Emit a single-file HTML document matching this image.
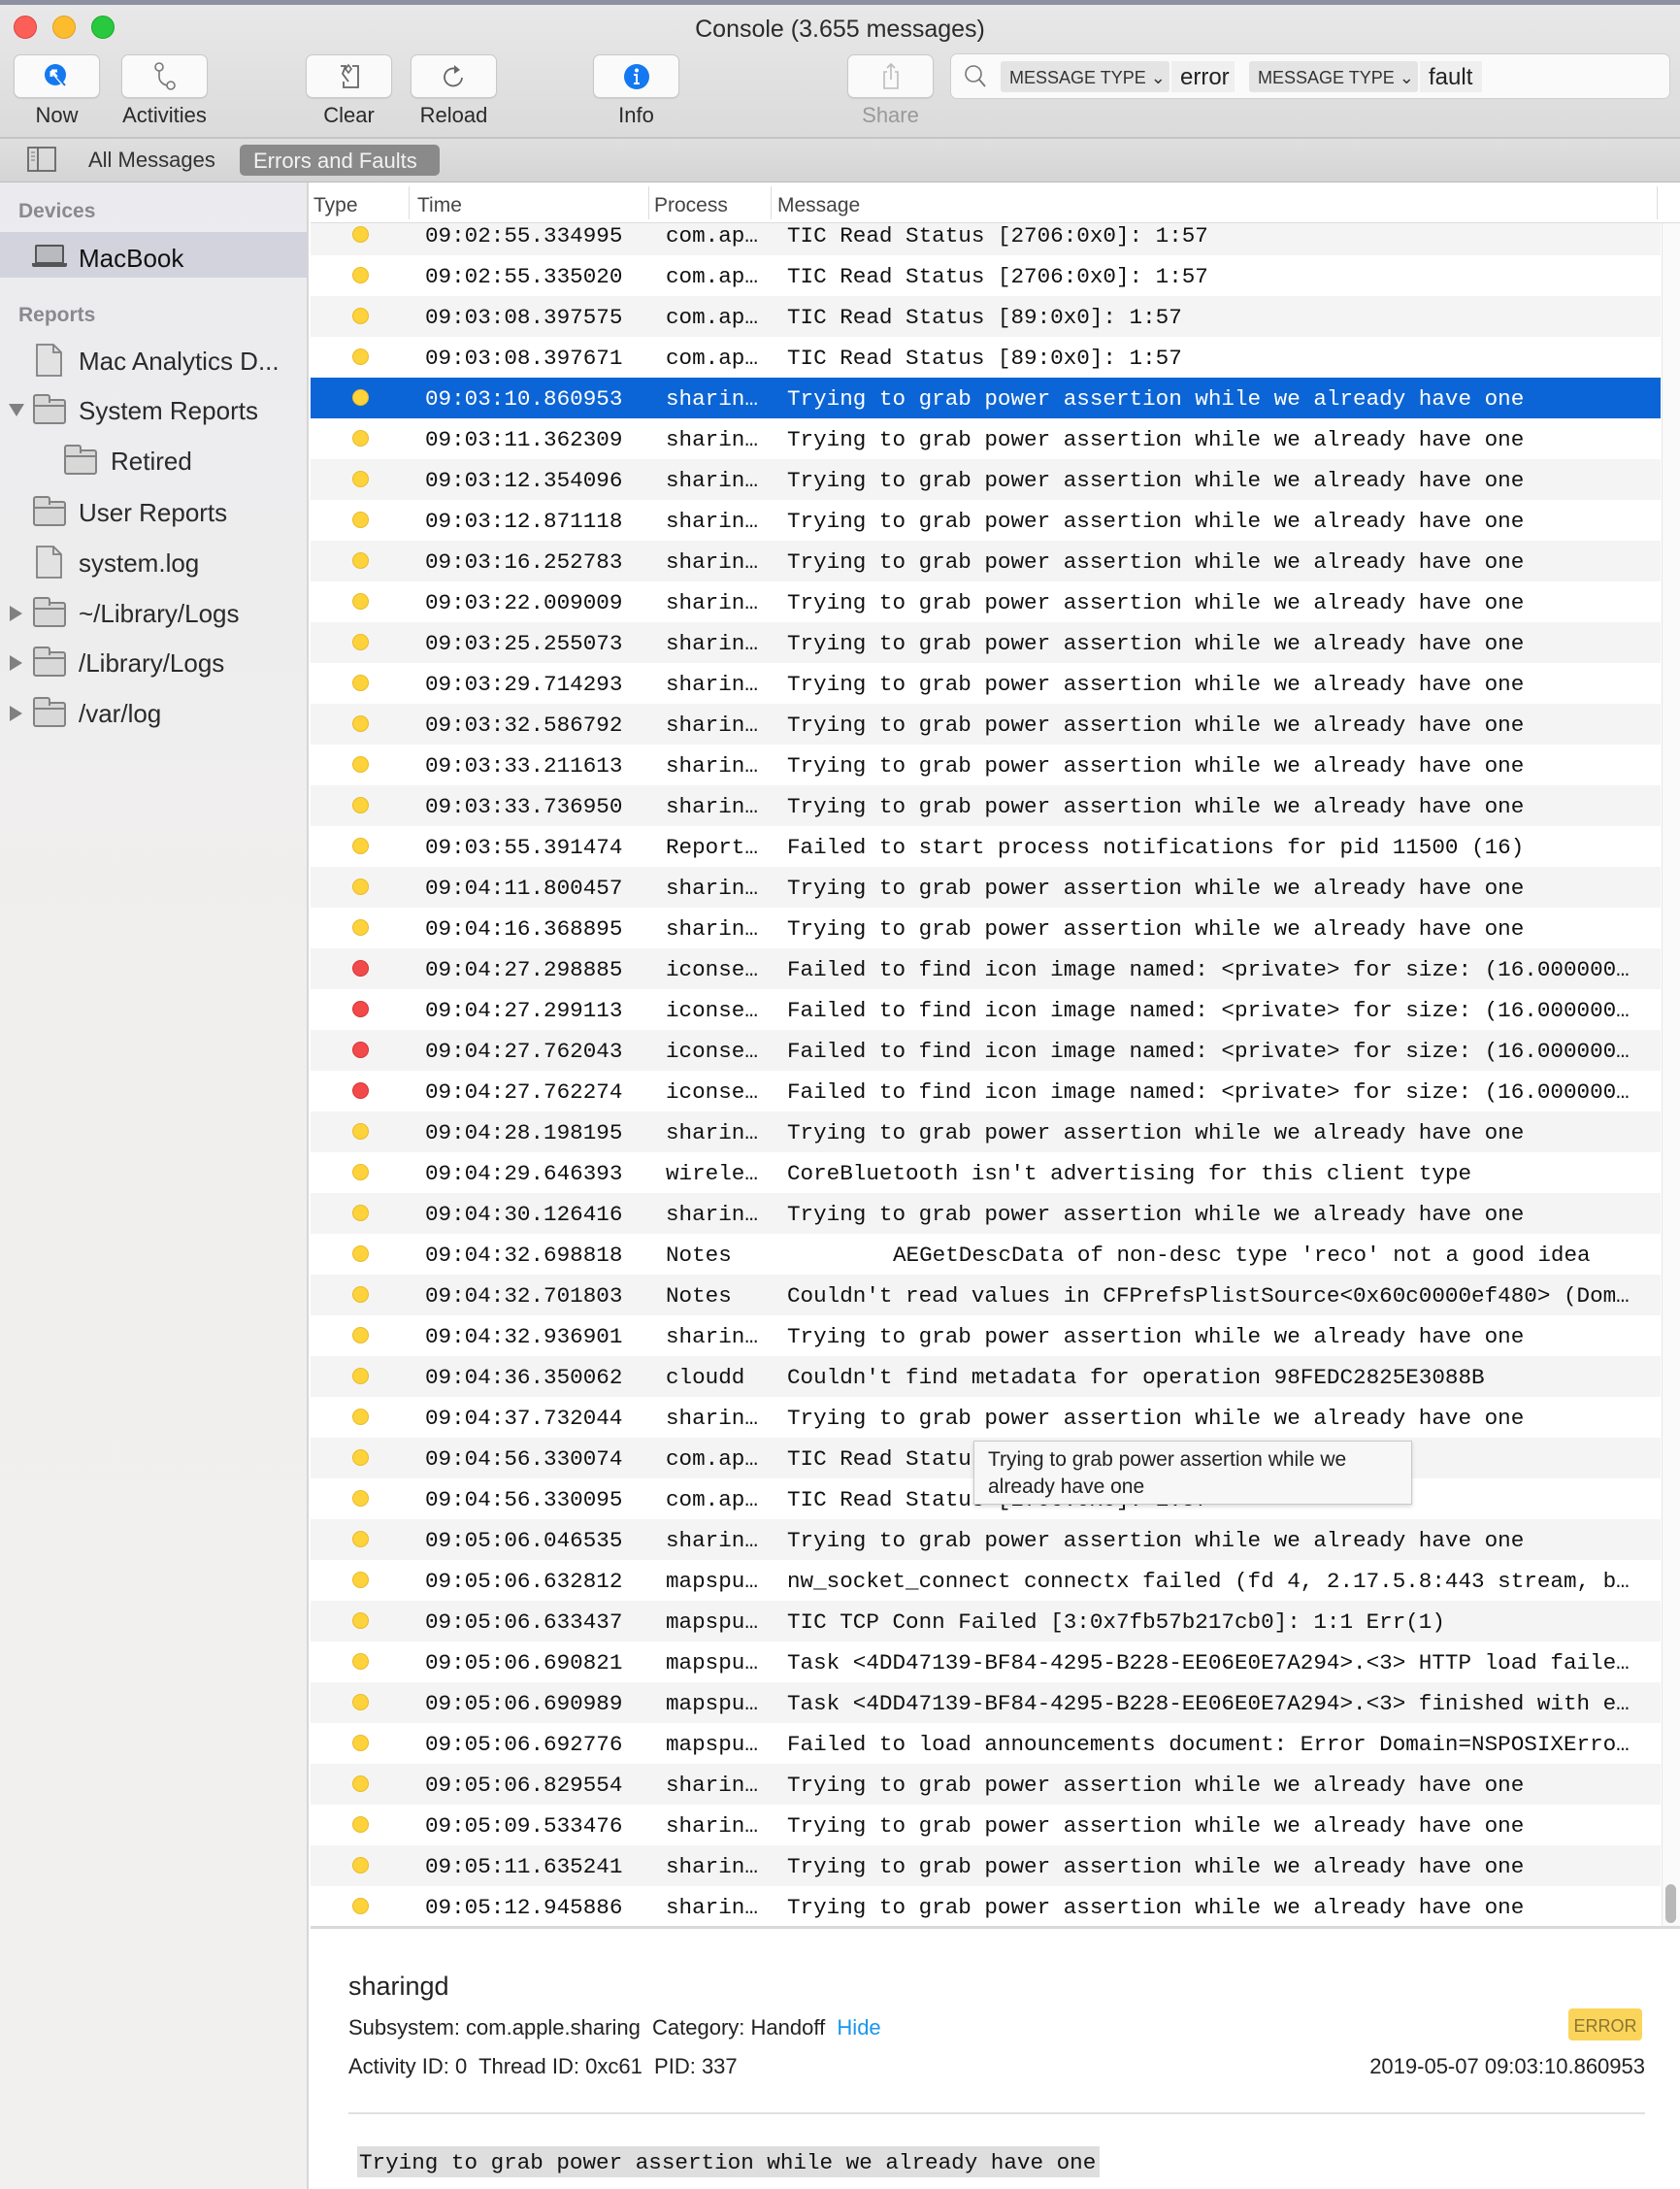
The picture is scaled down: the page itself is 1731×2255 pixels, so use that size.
<!DOCTYPE html>
<html><head><meta charset="utf-8"><style>
*{margin:0;padding:0;box-sizing:border-box}
body{width:1731px;height:2255px;overflow:hidden;position:relative;font-family:"Liberation Sans",sans-serif;background:#fff;color:#222}
.abs{position:absolute}
#top{left:0;top:0;width:1731px;height:188px;background:linear-gradient(#e9e8e9,#d7d6d7);border-top:5px solid #8d90a0}
#bar2{left:0;top:141px;width:1731px;height:47px;background:linear-gradient(#e0dfe0,#d5d4d5);border-top:2px solid #c4c4c4;border-bottom:1px solid #bcbcbc}
.light{width:24px;height:24px;border-radius:50%;top:16px}
.btn{top:56px;height:45px;background:#fafafa;border:1px solid #c9c9c9;border-radius:7px;box-shadow:0 1px 1px rgba(0,0,0,.08);display:flex;align-items:center;justify-content:center}
.lbl{top:106px;font-size:22px;color:#2a2a2a;text-align:center}
#side{left:0;top:188px;width:318px;height:2067px;background:linear-gradient(#ebebef,#f1efed 40%,#f2f0ee);border-right:2px solid #d6d6d6}
.sh{font-size:21px;font-weight:bold;color:#8a8a8e;left:19px}
.si{font-size:26px;color:#2a2a2a;left:81px;white-space:nowrap}
.fold{width:34px;height:26px;border:2px solid #838383;border-radius:3px;background:#d8d8d8}
.fold:before{content:"";position:absolute;left:-2px;top:-7px;width:14px;height:7px;border:2px solid #838383;border-bottom:none;border-radius:3px 3px 0 0;background:#d8d8d8}
.fold:after{content:"";position:absolute;left:0;top:4px;width:30px;height:2px;background:#838383}
.tri{width:0;height:0;border-top:8px solid transparent;border-bottom:8px solid transparent;border-left:13px solid #808080}
#hdr{left:320px;top:188px;width:1411px;height:42px;background:#fff;border-bottom:1px solid #ddd;font-size:21px;color:#444}
#hdr span{position:absolute;top:12px}
#hdr i{position:absolute;top:4px;width:1px;height:34px;background:#ddd}
#list{left:320px;top:230px;width:1391px;height:1754px;overflow:hidden}
#rows{position:absolute;left:0;top:-9px;width:100%}
.r{height:42px;position:relative;font-family:"Liberation Mono",monospace;font-size:22.6px;color:#111;white-space:pre}
.r:nth-child(odd){background:#f4f4f4}
.r:nth-child(even){background:#fff}
.r.sel{background:#0c65d6;color:#fff}
.r b{position:absolute;left:43px;top:12px;width:17px;height:17px;border-radius:50%;background:#fdd23b;border:1px solid #e9bb2a}
.r b.e{background:#f24a4a;border-color:#d83434}
.r span{position:absolute;top:9px}
.t{left:118px}.p{left:366px}.m{left:491px}
#det{left:320px;top:1984px;width:1411px;height:271px;background:#fff;border-top:3px solid #d9d9d9}
</style></head><body>
<div id="top" class="abs"></div>
<div class="abs light" style="left:14px;background:#fc5f57;border:1px solid #e0443e"></div>
<div class="abs light" style="left:54px;background:#fdbc2e;border:1px solid #dea123"></div>
<div class="abs light" style="left:94px;background:#28c83f;border:1px solid #1aab29"></div>
<div class="abs" style="left:0;width:1731px;top:16px;text-align:center;font-size:25px;color:#2b2b2b">Console (3.655 messages)</div>

<div class="abs btn" style="left:14px;width:89px"><svg width="30" height="34" viewBox="0 0 30 34"><circle cx="13" cy="15" r="11" fill="#1478f0"/><path d="M9 11l12 14M9 11v6M9 11h6" stroke="#fff" stroke-width="3" fill="none"/><path d="M15 17l8 9" stroke="#1478f0" stroke-width="2"/></svg></div>
<div class="abs btn" style="left:125px;width:89px"><svg width="30" height="34" viewBox="0 0 30 34"><circle cx="9" cy="7" r="4" fill="none" stroke="#777" stroke-width="1.6"/><circle cx="21" cy="26" r="4" fill="none" stroke="#777" stroke-width="1.6"/><path d="M9 11v6c0 5 4 8 8 9" fill="none" stroke="#777" stroke-width="1.6"/></svg></div>
<div class="abs btn" style="left:315px;width:89px"><svg width="30" height="34" viewBox="0 0 30 34"><path d="M6 6h5l-3 8 6 8M18 6h6v22H9v-6" fill="none" stroke="#666" stroke-width="1.8"/><path d="M14 5l3 4-3 4-3-4z" fill="none" stroke="#666" stroke-width="1.5"/></svg></div>
<div class="abs btn" style="left:423px;width:89px"><svg width="30" height="34" viewBox="0 0 30 34"><path d="M19 10a9 9 0 1 0 4 8" fill="none" stroke="#666" stroke-width="1.8"/><path d="M15 5l6 5-6 4z" fill="#666"/></svg></div>
<div class="abs btn" style="left:611px;width:89px"><svg width="32" height="34" viewBox="0 0 32 34"><circle cx="16" cy="17" r="13" fill="#1478f0"/><circle cx="16" cy="10.5" r="2" fill="#fff"/><path d="M13 14h4v9h2v2h-6v-2h2v-7h-2z" fill="#fff"/></svg></div>
<div class="abs btn" style="left:873px;width:89px"><svg width="30" height="34" viewBox="0 0 30 34"><path d="M11 12H8v17h14V12h-3M15 4v16M11 8l4-4 4 4" fill="none" stroke="#bbb" stroke-width="1.6"/></svg></div>
<div class="abs lbl" style="left:14px;width:89px">Now</div>
<div class="abs lbl" style="left:110px;width:119px">Activities</div>
<div class="abs lbl" style="left:315px;width:89px">Clear</div>
<div class="abs lbl" style="left:423px;width:89px">Reload</div>
<div class="abs lbl" style="left:611px;width:89px">Info</div>
<div class="abs lbl" style="left:873px;width:89px;color:#999">Share</div>

<div class="abs" style="left:979px;top:55px;width:742px;height:47px;background:#fafafa;border:1px solid #cfcfcf;border-radius:7px"></div>
<svg class="abs" style="left:991px;top:64px" width="28" height="30" viewBox="0 0 28 30"><circle cx="12" cy="12" r="8" fill="none" stroke="#777" stroke-width="1.6"/><path d="M18 18l6 7" stroke="#777" stroke-width="1.8"/></svg>
<div class="abs" style="left:1031px;top:63px;width:174px;height:32px;background:#e4e4e4;border-radius:3px;font-size:18px;color:#333;padding:7px 0 0 9px">MESSAGE TYPE ⌄</div>
<div class="abs" style="left:1207px;top:63px;width:65px;height:32px;background:#efefef;font-size:24px;color:#222;padding:3px 0 0 9px">error</div>
<div class="abs" style="left:1287px;top:63px;width:174px;height:32px;background:#e4e4e4;border-radius:3px;font-size:18px;color:#333;padding:7px 0 0 9px">MESSAGE TYPE ⌄</div>
<div class="abs" style="left:1463px;top:63px;width:64px;height:32px;background:#efefef;font-size:24px;color:#222;padding:3px 0 0 9px">fault</div>

<div id="bar2" class="abs"></div>
<svg class="abs" style="left:28px;top:151px" width="32" height="26" viewBox="0 0 32 26"><rect x="1" y="1" width="28" height="24" fill="none" stroke="#666" stroke-width="1.8"/><path d="M11 1v24" stroke="#666" stroke-width="1.8"/><path d="M4 6h4M4 10h4M4 14h4" stroke="#888" stroke-width="1.2"/></svg>
<div class="abs" style="left:91px;top:152px;font-size:22px;color:#333">All Messages</div>
<div class="abs" style="left:247px;top:149px;width:206px;height:32px;background:#8a8a8a;border-radius:5px;color:#f2f2f2;font-size:22px;padding:4px 0 0 14px">Errors and Faults</div>

<div id="side" class="abs"></div>
<div class="abs sh" style="top:206px">Devices</div>
<div class="abs" style="left:0;top:239px;width:317px;height:47px;background:#d3d3dd"></div>
<div class="abs" style="left:36px;top:252px;width:30px;height:20px;border:2px solid #555;border-radius:2px;background:#b9b9c0"></div>
<div class="abs" style="left:33px;top:271px;width:36px;height:4px;background:#555;border-radius:0 0 2px 2px"></div>
<div class="abs si" style="top:251px;color:#111">MacBook</div>
<div class="abs sh" style="top:313px">Reports</div>

<svg class="abs" style="left:37px;top:354px" width="28" height="34" viewBox="0 0 28 34"><path d="M1 1h17l8 8v24H1z" fill="#e2e2e2" stroke="#808080" stroke-width="1.8"/><path d="M18 1v8h8" fill="none" stroke="#808080" stroke-width="1.8"/></svg>
<div class="abs si" style="top:357px">Mac Analytics D...</div>
<div class="abs" style="left:9px;top:416px;width:0;height:0;border-left:8px solid transparent;border-right:8px solid transparent;border-top:13px solid #808080"></div>
<div class="abs fold" style="left:34px;top:411px"></div>
<div class="abs si" style="top:408px">System Reports</div>
<div class="abs fold" style="left:66px;top:463px"></div>
<div class="abs si" style="top:460px;left:114px">Retired</div>
<div class="abs fold" style="left:34px;top:516px"></div>
<div class="abs si" style="top:513px">User Reports</div>
<svg class="abs" style="left:37px;top:562px" width="28" height="34" viewBox="0 0 28 34"><path d="M1 1h17l8 8v24H1z" fill="#e2e2e2" stroke="#808080" stroke-width="1.8"/><path d="M18 1v8h8" fill="none" stroke="#808080" stroke-width="1.8"/></svg>
<div class="abs si" style="top:565px">system.log</div>
<div class="abs tri" style="left:10px;top:624px"></div>
<div class="abs fold" style="left:34px;top:620px"></div>
<div class="abs si" style="top:617px">~/Library/Logs</div>
<div class="abs tri" style="left:10px;top:675px"></div>
<div class="abs fold" style="left:34px;top:671px"></div>
<div class="abs si" style="top:668px">/Library/Logs</div>
<div class="abs tri" style="left:10px;top:727px"></div>
<div class="abs fold" style="left:34px;top:723px"></div>
<div class="abs si" style="top:720px">/var/log</div>

<div id="hdr" class="abs"><span style="left:3px">Type</span><i style="left:101px"></i><span style="left:110px">Time</span><i style="left:348px"></i><span style="left:354px">Process</span><i style="left:474px"></i><span style="left:481px">Message</span><i style="left:1387px"></i></div>

<div id="list" class="abs"><div id="rows">
<div class="r"><b></b><span class="t">09:02:55.334995</span><span class="p">com.ap…</span><span class="m">TIC Read Status [2706:0x0]: 1:57</span></div>
<div class="r"><b></b><span class="t">09:02:55.335020</span><span class="p">com.ap…</span><span class="m">TIC Read Status [2706:0x0]: 1:57</span></div>
<div class="r"><b></b><span class="t">09:03:08.397575</span><span class="p">com.ap…</span><span class="m">TIC Read Status [89:0x0]: 1:57</span></div>
<div class="r"><b></b><span class="t">09:03:08.397671</span><span class="p">com.ap…</span><span class="m">TIC Read Status [89:0x0]: 1:57</span></div>
<div class="r sel"><b></b><span class="t">09:03:10.860953</span><span class="p">sharin…</span><span class="m">Trying to grab power assertion while we already have one</span></div>
<div class="r"><b></b><span class="t">09:03:11.362309</span><span class="p">sharin…</span><span class="m">Trying to grab power assertion while we already have one</span></div>
<div class="r"><b></b><span class="t">09:03:12.354096</span><span class="p">sharin…</span><span class="m">Trying to grab power assertion while we already have one</span></div>
<div class="r"><b></b><span class="t">09:03:12.871118</span><span class="p">sharin…</span><span class="m">Trying to grab power assertion while we already have one</span></div>
<div class="r"><b></b><span class="t">09:03:16.252783</span><span class="p">sharin…</span><span class="m">Trying to grab power assertion while we already have one</span></div>
<div class="r"><b></b><span class="t">09:03:22.009009</span><span class="p">sharin…</span><span class="m">Trying to grab power assertion while we already have one</span></div>
<div class="r"><b></b><span class="t">09:03:25.255073</span><span class="p">sharin…</span><span class="m">Trying to grab power assertion while we already have one</span></div>
<div class="r"><b></b><span class="t">09:03:29.714293</span><span class="p">sharin…</span><span class="m">Trying to grab power assertion while we already have one</span></div>
<div class="r"><b></b><span class="t">09:03:32.586792</span><span class="p">sharin…</span><span class="m">Trying to grab power assertion while we already have one</span></div>
<div class="r"><b></b><span class="t">09:03:33.211613</span><span class="p">sharin…</span><span class="m">Trying to grab power assertion while we already have one</span></div>
<div class="r"><b></b><span class="t">09:03:33.736950</span><span class="p">sharin…</span><span class="m">Trying to grab power assertion while we already have one</span></div>
<div class="r"><b></b><span class="t">09:03:55.391474</span><span class="p">Report…</span><span class="m">Failed to start process notifications for pid 11500 (16)</span></div>
<div class="r"><b></b><span class="t">09:04:11.800457</span><span class="p">sharin…</span><span class="m">Trying to grab power assertion while we already have one</span></div>
<div class="r"><b></b><span class="t">09:04:16.368895</span><span class="p">sharin…</span><span class="m">Trying to grab power assertion while we already have one</span></div>
<div class="r"><b class="e"></b><span class="t">09:04:27.298885</span><span class="p">iconse…</span><span class="m">Failed to find icon image named: &lt;private&gt; for size: (16.000000…</span></div>
<div class="r"><b class="e"></b><span class="t">09:04:27.299113</span><span class="p">iconse…</span><span class="m">Failed to find icon image named: &lt;private&gt; for size: (16.000000…</span></div>
<div class="r"><b class="e"></b><span class="t">09:04:27.762043</span><span class="p">iconse…</span><span class="m">Failed to find icon image named: &lt;private&gt; for size: (16.000000…</span></div>
<div class="r"><b class="e"></b><span class="t">09:04:27.762274</span><span class="p">iconse…</span><span class="m">Failed to find icon image named: &lt;private&gt; for size: (16.000000…</span></div>
<div class="r"><b></b><span class="t">09:04:28.198195</span><span class="p">sharin…</span><span class="m">Trying to grab power assertion while we already have one</span></div>
<div class="r"><b></b><span class="t">09:04:29.646393</span><span class="p">wirele…</span><span class="m">CoreBluetooth isn't advertising for this client type</span></div>
<div class="r"><b></b><span class="t">09:04:30.126416</span><span class="p">sharin…</span><span class="m">Trying to grab power assertion while we already have one</span></div>
<div class="r"><b></b><span class="t">09:04:32.698818</span><span class="p">Notes</span><span class="m" style="left:600px">AEGetDescData of non-desc type 'reco' not a good idea</span></div>
<div class="r"><b></b><span class="t">09:04:32.701803</span><span class="p">Notes</span><span class="m">Couldn't read values in CFPrefsPlistSource&lt;0x60c0000ef480&gt; (Dom…</span></div>
<div class="r"><b></b><span class="t">09:04:32.936901</span><span class="p">sharin…</span><span class="m">Trying to grab power assertion while we already have one</span></div>
<div class="r"><b></b><span class="t">09:04:36.350062</span><span class="p">cloudd</span><span class="m">Couldn't find metadata for operation 98FEDC2825E3088B</span></div>
<div class="r"><b></b><span class="t">09:04:37.732044</span><span class="p">sharin…</span><span class="m">Trying to grab power assertion while we already have one</span></div>
<div class="r"><b></b><span class="t">09:04:56.330074</span><span class="p">com.ap…</span><span class="m">TIC Read Status [2706:0x0]: 1:57</span></div>
<div class="r"><b></b><span class="t">09:04:56.330095</span><span class="p">com.ap…</span><span class="m">TIC Read Status [2706:0x0]: 1:57</span></div>
<div class="r"><b></b><span class="t">09:05:06.046535</span><span class="p">sharin…</span><span class="m">Trying to grab power assertion while we already have one</span></div>
<div class="r"><b></b><span class="t">09:05:06.632812</span><span class="p">mapspu…</span><span class="m">nw_socket_connect connectx failed (fd 4, 2.17.5.8:443 stream, b…</span></div>
<div class="r"><b></b><span class="t">09:05:06.633437</span><span class="p">mapspu…</span><span class="m">TIC TCP Conn Failed [3:0x7fb57b217cb0]: 1:1 Err(1)</span></div>
<div class="r"><b></b><span class="t">09:05:06.690821</span><span class="p">mapspu…</span><span class="m">Task &lt;4DD47139-BF84-4295-B228-EE06E0E7A294&gt;.&lt;3&gt; HTTP load faile…</span></div>
<div class="r"><b></b><span class="t">09:05:06.690989</span><span class="p">mapspu…</span><span class="m">Task &lt;4DD47139-BF84-4295-B228-EE06E0E7A294&gt;.&lt;3&gt; finished with e…</span></div>
<div class="r"><b></b><span class="t">09:05:06.692776</span><span class="p">mapspu…</span><span class="m">Failed to load announcements document: Error Domain=NSPOSIXErro…</span></div>
<div class="r"><b></b><span class="t">09:05:06.829554</span><span class="p">sharin…</span><span class="m">Trying to grab power assertion while we already have one</span></div>
<div class="r"><b></b><span class="t">09:05:09.533476</span><span class="p">sharin…</span><span class="m">Trying to grab power assertion while we already have one</span></div>
<div class="r"><b></b><span class="t">09:05:11.635241</span><span class="p">sharin…</span><span class="m">Trying to grab power assertion while we already have one</span></div>
<div class="r"><b></b><span class="t">09:05:12.945886</span><span class="p">sharin…</span><span class="m">Trying to grab power assertion while we already have one</span></div>
</div></div>
<div class="abs" style="left:1712px;top:230px;width:19px;height:1754px;background:#fafafa;border-left:1px solid #e6e6e6"></div>
<div class="abs" style="left:1716px;top:1941px;width:11px;height:40px;background:#b8b8b8;border-radius:6px"></div>

<div class="abs" style="left:1003px;top:1484px;width:452px;height:66px;background:#f7f7f7;border:1px solid #c9c9c9;box-shadow:0 2px 4px rgba(0,0,0,.15);font-size:21px;line-height:28px;color:#222;padding:5px 0 0 14px">Trying to grab power assertion while we<br>already have one</div>

<div id="det" class="abs"></div>
<div class="abs" style="left:359px;top:2031px;font-size:27px;color:#222">sharingd</div>
<div class="abs" style="left:359px;top:2076px;font-size:22px;color:#222;white-space:pre">Subsystem: com.apple.sharing  Category: Handoff  <span style="color:#1a95ee">Hide</span></div>
<div class="abs" style="left:359px;top:2116px;font-size:22px;color:#222;white-space:pre">Activity ID: 0  Thread ID: 0xc61  PID: 337</div>
<div class="abs" style="left:1616px;top:2069px;width:76px;height:33px;background:#fbd55a;border-radius:4px;font-size:18px;color:#8a7535;text-align:center;padding-top:8px">ERROR</div>
<div class="abs" style="right:36px;top:2116px;font-size:22px;color:#222">2019-05-07 09:03:10.860953</div>
<div class="abs" style="left:359px;top:2176px;width:1336px;height:2px;background:#e0e0e0"></div>
<div class="abs" style="left:368px;top:2211px;height:32px;background:#dedede;font-family:'Liberation Mono',monospace;font-size:22.6px;color:#111;padding:4px 4px 0 2px;white-space:pre">Trying to grab power assertion while we already have one</div>
</body></html>
